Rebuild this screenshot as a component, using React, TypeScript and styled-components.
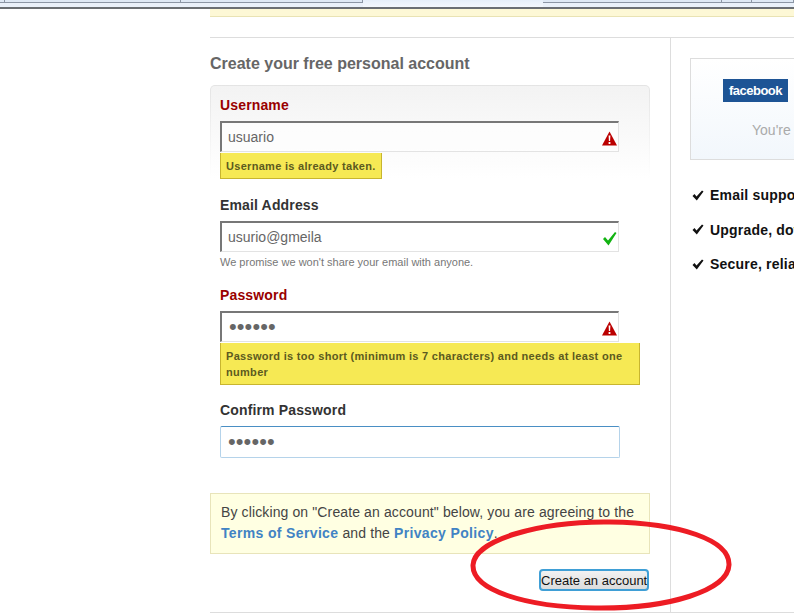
import styled, { createGlobalStyle } from "styled-components";

const Global = createGlobalStyle`
  html, body {
    margin: 0;
    padding: 0;
    background: #fff;
    overflow: hidden;
  }
  body {
    font-family: "Liberation Sans", Arial, sans-serif;
    color: #333;
  }
`;

const Screen = styled.div`
  position: relative;
  width: 794px;
  height: 615px;
  overflow: hidden;
`;

const TabStrip = styled.div`
  display: flex;
  height: 7px;
  background: #eaf1fa;
  border-bottom: 2px solid #6b6f73;
  box-sizing: content-box;
`;

const Tab = styled.div<{ $w: number; $active?: boolean }>`
  width: ${(p) => p.$w}px;
  height: ${(p) => (p.$active ? 7 : 3)}px;
  box-sizing: border-box;
  background: ${(p) => (p.$active ? "linear-gradient(#e6eff9, #f4f8fd)" : "#dfe9f5")};
  border-bottom: ${(p) => (p.$active ? "none" : "1px solid #8c96a5")};
  border-right: ${(p) => (p.$active ? "none" : "1px solid #8c96a5")};
`;

const Page = styled.div`
  padding-left: 210px;
`;

const Flash = styled.div`
  height: 7px;
  margin-bottom: 20px;
  background: #fdf8d6;
  border-bottom: 1px solid #e9e3b4;
`;

const Columns = styled.div`
  display: flex;
  height: 574px;
  border-top: 1px solid #ddd;
  border-bottom: 1px solid #ddd;
`;

const Main = styled.div`
  width: 461px;
  box-sizing: border-box;
  border-right: 1px solid #ddd;
  padding-top: 15px;
`;

const Heading = styled.h2`
  margin: 0 0 11px;
  font-size: 16px;
  line-height: 21px;
  font-weight: bold;
  color: #666;
`;

const Panel = styled.div`
  width: 440px;
  height: 110px;
  box-sizing: border-box;
  padding: 9px 9px 0;
  border: 1px solid transparent;
  border-bottom: none;
  border-radius: 5px 5px 0 0;
  background:
    linear-gradient(#f3f3f3, #fff 85%) padding-box,
    linear-gradient(#e4e4e4, #fff 85%) border-box;
`;

const Fields = styled.div`
  padding: 0 10px;
`;

const Field = styled.div`
  margin-bottom: 15px;
`;

const Label = styled.div<{ $error?: boolean }>`
  font-size: 14px;
  line-height: 20px;
  font-weight: bold;
  letter-spacing: 0.15px;
  margin-bottom: 6px;
  color: ${(p) => (p.$error ? "#990000" : "#333")};
`;

const InputWrap = styled.div`
  position: relative;
  width: 400px;
`;

const TextInput = styled.input<{ $focus?: boolean; $secret?: boolean }>`
  display: block;
  width: ${(p) => (p.$focus ? 400 : 399)}px;
  height: ${(p) => (p.$focus ? 32 : 31)}px;
  box-sizing: border-box;
  padding: 0 ${(p) => (p.$secret ? 7 : 6)}px;
  font-family: "Liberation Sans", Arial, sans-serif;
  font-size: ${(p) => (p.$secret ? 22 : 14)}px;
  letter-spacing: ${(p) => (p.$secret ? 0.1 : 0)}px;
  color: #666;
  outline: none;
  background: ${(p) => (p.$focus ? "#fff" : "rgba(255,255,255,0.6)")};
  border: 1px solid ${(p) => (p.$focus ? "#b5d3ea" : "#e3e3e3")};
  border-top: ${(p) => (p.$focus ? "1px solid #4a8fc4" : "2px solid #777")};
  border-left: ${(p) => (p.$focus ? "1px solid #b5d3ea" : "2px solid #777")};
  border-radius: ${(p) => (p.$focus ? "2px" : "0")};
`;

const StatusIcon = styled.svg`
  position: absolute;
  right: 3px;
  top: 10px;
  width: 15px;
  height: 15px;
`;

const Tip = styled.div<{ $w: number }>`
  width: ${(p) => p.$w}px;
  margin-top: 1px;
  box-sizing: border-box;
  padding: 5px 5px 4px;
  font-size: 11px;
  line-height: 16px;
  font-weight: bold;
  letter-spacing: 0.3px;
  color: #5c5a20;
  background: #f6e954;
  border: 1px solid #c8b52f;
  border-top: none;
`;

const Note = styled.div`
  margin-top: 4px;
  padding-bottom: 1px;
  font-size: 11px;
  line-height: 13px;
  color: #777;
`;

const Notice = styled.div`
  width: 440px;
  box-sizing: border-box;
  margin-top: 35px;
  padding: 8px 10px 9px;
  font-size: 14px;
  line-height: 21px;
  letter-spacing: 0.12px;
  color: #444;
  background: #ffffe2;
  border: 1px solid #e8e4ba;
`;

const NoticeLink = styled.a`
  font-weight: bold;
  letter-spacing: 0.35px;
  color: #4183c4;
`;

const Actions = styled.div`
  display: flex;
  justify-content: flex-end;
  width: 439px;
  margin-top: 15px;
`;

const SubmitButton = styled.button`
  width: 110px;
  height: 22px;
  padding: 0;
  box-sizing: border-box;
  font-family: "Liberation Sans", Arial, sans-serif;
  font-size: 13px;
  white-space: nowrap;
  color: #111;
  background: linear-gradient(#f2f2f2, #dcdcdc);
  border: 2px solid #3f9fd6;
  border-radius: 4px;
`;

const Side = styled.div`
  flex: 1;
  min-width: 0;
  padding: 20px 0 0 19px;
  white-space: nowrap;
  overflow: hidden;
`;

const PromoCard = styled.div`
  width: 300px;
  height: 102px;
  box-sizing: border-box;
  padding-top: 20px;
  padding-left: 32px;
  background: linear-gradient(#fff, #f2f7fc);
  border: 1px solid #ddd;
  border-right: none;
`;

const FacebookLogo = styled.div`
  width: 65px;
  height: 23px;
  font-size: 13px;
  line-height: 23px;
  font-weight: bold;
  text-align: center;
  letter-spacing: -0.5px;
  color: #fff;
  background: #1d5495;
`;

const PromoText = styled.div`
  margin: 19px 0 0 29px;
  font-size: 14px;
  line-height: 18px;
  color: #aaa;
`;

const Perks = styled.ul`
  list-style: none;
  margin: 25px 0 0;
  padding: 0 0 0 2px;
`;

const Perk = styled.li`
  display: flex;
  align-items: center;
  gap: 6px;
  height: 20px;
  margin-bottom: 14.5px;
  font-size: 14px;
  font-weight: bold;
  letter-spacing: 0.2px;
  color: #111;

  svg {
    flex-shrink: 0;
  }
`;

const Scribble = styled.svg`
  position: absolute;
  left: 0;
  top: 0;
  width: 794px;
  height: 615px;
  pointer-events: none;
`;

const WarningIcon = () => (
  <StatusIcon viewBox="0 0 15 15">
    <path d="M7.5 0.5 L15 14.5 L0 14.5 Z" fill="#bb0000" />
    <path d="M6.6 4.5 h1.8 l-0.3 5.5 h-1.2 Z M6.6 11 h1.8 v2 h-1.8 Z" fill="#fff" />
  </StatusIcon>
);

const ValidIcon = () => (
  <StatusIcon viewBox="0 0 15 15">
    <path d="M1 8 L3 6 L6 9.5 L13 1 L14.5 2 L6.5 14.5 Z" fill="#12b312" />
  </StatusIcon>
);

const PerkCheck = () => (
  <svg width="12" height="11" viewBox="0 0 12 11">
    <path d="M0.5 6 L2.5 4 L4.5 6.5 L10 0.5 L11.5 1.5 L4.8 10.5 Z" fill="#111" />
  </svg>
);

export default function App() {
  return (
    <Screen>
      <Global />
      <TabStrip>
        <Tab $w={5} />
        <Tab $w={176} />
        <Tab $w={182} />
        <Tab $w={180} $active />
        <Tab $w={179} />
        <Tab $w={30} />
        <Tab $w={42} />
      </TabStrip>
      <Page>
        <Flash />
        <Columns>
          <Main>
            <Heading>Create your free personal account</Heading>
            <Panel>
              <Label $error>Username</Label>
              <InputWrap>
                <TextInput readOnly defaultValue="usuario" />
                <WarningIcon />
              </InputWrap>
              <Tip $w={162}>Username is already taken.</Tip>
            </Panel>
            <Fields>
              <Field>
                <Label>Email Address</Label>
                <InputWrap>
                  <TextInput readOnly defaultValue="usurio@gmeila" />
                  <ValidIcon />
                </InputWrap>
                <Note>We promise we won't share your email with anyone.</Note>
              </Field>
              <Field>
                <Label $error>Password</Label>
                <InputWrap>
                  <TextInput readOnly type="password" defaultValue="secret" $secret />
                  <WarningIcon />
                </InputWrap>
                <Tip $w={420}>
                  Password is too short (minimum is 7 characters) and needs at least one number
                </Tip>
              </Field>
              <Field>
                <Label>Confirm Password</Label>
                <InputWrap>
                  <TextInput readOnly type="password" defaultValue="secret" $secret $focus />
                </InputWrap>
              </Field>
            </Fields>
            <Notice>
              By clicking on "Create an account" below, you are agreeing to the{" "}
              <NoticeLink>Terms of Service</NoticeLink> and the{" "}
              <NoticeLink>Privacy Policy</NoticeLink>.
            </Notice>
            <Actions>
              <SubmitButton>Create an account</SubmitButton>
            </Actions>
          </Main>
          <Side>
            <PromoCard>
              <FacebookLogo>facebook</FacebookLogo>
              <PromoText>You're one click away</PromoText>
            </PromoCard>
            <Perks>
              <Perk>
                <PerkCheck />
                Email support
              </Perk>
              <Perk>
                <PerkCheck />
                Upgrade, downgrade
              </Perk>
              <Perk>
                <PerkCheck />
                Secure, reliable
              </Perk>
            </Perks>
          </Side>
        </Columns>
      </Page>
      <Scribble viewBox="0 0 794 615">
        <path
          d="M473 565 C474 540 540 521 610 522 C680 523 730 540 729 565 C728 590 670 609 595 608 C525 607 472 590 473 565 Z"
          fill="none"
          stroke="#ed1c24"
          strokeWidth="5"
        />
      </Scribble>
    </Screen>
  );
}
